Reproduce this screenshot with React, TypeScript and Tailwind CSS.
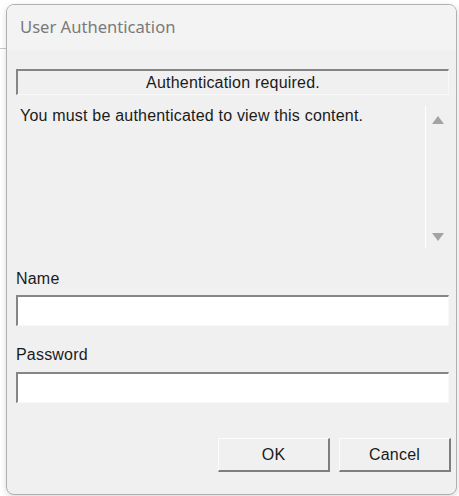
const dialogFont = { fontFamily: '"Liberation Sans", Arial, sans-serif' };

function Sunken({ className, children }: { className?: string; children?: React.ReactNode }) {
  return (
    <div
      className={
        "border-t-2 border-l-2 border-b border-r border-t-[#858585] border-l-[#858585] border-b-[#f8f8f8] border-r-[#f8f8f8] " +
        (className ?? "")
      }
    >
      {children}
    </div>
  );
}

function DialogButton({ label }: { label: string }) {
  return (
    <button
      className="w-[112px] h-[34px] bg-[#f0f0f0] border-t border-l border-t-[#fbfbfb] border-l-[#fbfbfb] border-b-2 border-r-2 border-b-[#7e7e7e] border-r-[#7e7e7e] text-[16px] tracking-[0.2px] text-[#1a1a1a]"
      style={dialogFont}
    >
      {label}
    </button>
  );
}

function Arrow({ up }: { up?: boolean }) {
  return (
    <svg width="12" height="8" viewBox="0 0 12 8">
      <path d={up ? "M6 0 L12 8 L0 8 Z" : "M0 0 L12 0 L6 8 Z"} fill="#a3a3a3" />
    </svg>
  );
}

export default function App() {
  return (
    <div className="w-[459px] h-[496px] bg-white flex overflow-hidden">
      <div className="w-[6px] shrink-0">
        <div className="mt-[48px] h-px bg-[#c9c9c9]" />
      </div>
      <div className="mt-[4px] w-[451px] h-[491px] shrink-0 rounded-[8px] border border-[#b0b0b0] bg-[#f0f0f0] overflow-hidden flex flex-col shadow-[0_2px_6px_rgba(0,0,0,0.15)]">
        <div
          className="h-[45px] bg-[#f3f3f3] pl-[13px] pt-[12px] text-[16.6px] leading-[20px] text-[#7a7a7a]"
          style={{ fontFamily: '"Noto Sans", "Open Sans", sans-serif' }}
        >
          User Authentication
        </div>
        <div className="pl-[9px] text-[#1b1b1b] text-[16px] leading-[18px] tracking-[0.2px]" style={dialogFont}>
          <Sunken className="mt-[19px] w-[433px] h-[26px] flex items-center justify-center">
            Authentication required.
          </Sunken>
          <div className="mt-[11px] h-[142px] flex">
            <div className="w-[410px] border-r border-r-white pl-[4px] pt-[1px]">
              You must be authenticated to view this content.
            </div>
            <div className="w-[23px] flex flex-col items-center justify-between pt-[10px] pb-[7px]">
              <Arrow up />
              <Arrow />
            </div>
          </div>
          <div className="mt-[22px]">Name</div>
          <Sunken className="mt-[7px] w-[433px] h-[31px] bg-white" />
          <div className="mt-[20px]">Password</div>
          <Sunken className="mt-[8px] w-[433px] h-[31px] bg-white" />
          <div className="mt-[35px] w-[435px] flex justify-end gap-[9px]">
            <DialogButton label="OK" />
            <DialogButton label="Cancel" />
          </div>
        </div>
      </div>
    </div>
  );
}
